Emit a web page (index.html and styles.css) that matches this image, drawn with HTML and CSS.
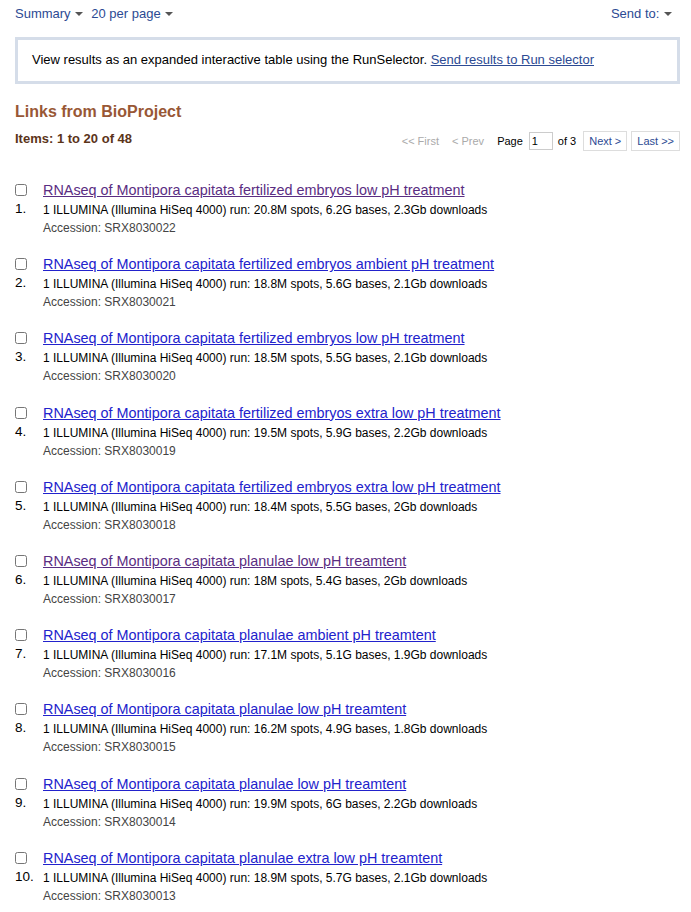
FILE: index.html
```html
<!DOCTYPE html>
<html lang="en">
<head>
    <meta charset="UTF-8">
    <title>Links from BioProject - SRA</title>
    <link rel="stylesheet" href="styles.css">
</head>
<body>

    <!-- Topbar med visning og send to -->
    <div class="topbar">
        <div class="display-opts">
            <a class="drop">Summary <span class="caret"></span></a>
            <a class="drop">20 per page <span class="caret"></span></a>
        </div>
        <a class="drop">Send to: <span class="caret"></span></a>
    </div>

    <div class="runsel-box">
        View results as an expanded interactive table using the RunSelector. <a href="#" class="plain-link">Send results to Run selector</a>
    </div>

    <h2 class="result-title">Links from BioProject</h2>

    <div class="pager-row">
        <h3 class="result-count">Items: 1 to 20 of 48</h3>
        <div class="pager">
            <span class="off">&lt;&lt; First</span>
            <span class="off">&lt; Prev</span>
            <span class="page-lbl">Page</span>
            <input type="text" class="page-input" value="1">
            <span class="page-lbl">of 3</span>
            <a class="pg-btn">Next &gt;</a>
            <a class="pg-btn">Last &gt;&gt;</a>
        </div>
    </div>

    <div class="results">
        <div class="rprt">
            <div class="rprt-left"><input type="checkbox"><span class="num">1.</span></div>
            <div class="rprt-body">
                <a href="#" class="title visited">RNAseq of Montipora capitata fertilized embryos low pH treatment</a>
                <p class="desc">1 ILLUMINA (Illumina HiSeq 4000) run: 20.8M spots, 6.2G bases, 2.3Gb downloads</p>
                <p class="acc">Accession: SRX8030022</p>
            </div>
        </div>
        <div class="rprt">
            <div class="rprt-left"><input type="checkbox"><span class="num">2.</span></div>
            <div class="rprt-body">
                <a href="#" class="title">RNAseq of Montipora capitata fertilized embryos ambient pH treatment</a>
                <p class="desc">1 ILLUMINA (Illumina HiSeq 4000) run: 18.8M spots, 5.6G bases, 2.1Gb downloads</p>
                <p class="acc">Accession: SRX8030021</p>
            </div>
        </div>
        <div class="rprt">
            <div class="rprt-left"><input type="checkbox"><span class="num">3.</span></div>
            <div class="rprt-body">
                <a href="#" class="title">RNAseq of Montipora capitata fertilized embryos low pH treatment</a>
                <p class="desc">1 ILLUMINA (Illumina HiSeq 4000) run: 18.5M spots, 5.5G bases, 2.1Gb downloads</p>
                <p class="acc">Accession: SRX8030020</p>
            </div>
        </div>
        <div class="rprt">
            <div class="rprt-left"><input type="checkbox"><span class="num">4.</span></div>
            <div class="rprt-body">
                <a href="#" class="title">RNAseq of Montipora capitata fertilized embryos extra low pH treatment</a>
                <p class="desc">1 ILLUMINA (Illumina HiSeq 4000) run: 19.5M spots, 5.9G bases, 2.2Gb downloads</p>
                <p class="acc">Accession: SRX8030019</p>
            </div>
        </div>
        <div class="rprt">
            <div class="rprt-left"><input type="checkbox"><span class="num">5.</span></div>
            <div class="rprt-body">
                <a href="#" class="title">RNAseq of Montipora capitata fertilized embryos extra low pH treatment</a>
                <p class="desc">1 ILLUMINA (Illumina HiSeq 4000) run: 18.4M spots, 5.5G bases, 2Gb downloads</p>
                <p class="acc">Accession: SRX8030018</p>
            </div>
        </div>
        <div class="rprt">
            <div class="rprt-left"><input type="checkbox"><span class="num">6.</span></div>
            <div class="rprt-body">
                <a href="#" class="title visited">RNAseq of Montipora capitata planulae low pH treamtent</a>
                <p class="desc">1 ILLUMINA (Illumina HiSeq 4000) run: 18M spots, 5.4G bases, 2Gb downloads</p>
                <p class="acc">Accession: SRX8030017</p>
            </div>
        </div>
        <div class="rprt">
            <div class="rprt-left"><input type="checkbox"><span class="num">7.</span></div>
            <div class="rprt-body">
                <a href="#" class="title">RNAseq of Montipora capitata planulae ambient pH treamtent</a>
                <p class="desc">1 ILLUMINA (Illumina HiSeq 4000) run: 17.1M spots, 5.1G bases, 1.9Gb downloads</p>
                <p class="acc">Accession: SRX8030016</p>
            </div>
        </div>
        <div class="rprt">
            <div class="rprt-left"><input type="checkbox"><span class="num">8.</span></div>
            <div class="rprt-body">
                <a href="#" class="title">RNAseq of Montipora capitata planulae low pH treamtent</a>
                <p class="desc">1 ILLUMINA (Illumina HiSeq 4000) run: 16.2M spots, 4.9G bases, 1.8Gb downloads</p>
                <p class="acc">Accession: SRX8030015</p>
            </div>
        </div>
        <div class="rprt">
            <div class="rprt-left"><input type="checkbox"><span class="num">9.</span></div>
            <div class="rprt-body">
                <a href="#" class="title">RNAseq of Montipora capitata planulae low pH treamtent</a>
                <p class="desc">1 ILLUMINA (Illumina HiSeq 4000) run: 19.9M spots, 6G bases, 2.2Gb downloads</p>
                <p class="acc">Accession: SRX8030014</p>
            </div>
        </div>
        <div class="rprt">
            <div class="rprt-left"><input type="checkbox"><span class="num">10.</span></div>
            <div class="rprt-body">
                <a href="#" class="title">RNAseq of Montipora capitata planulae extra low pH treamtent</a>
                <p class="desc">1 ILLUMINA (Illumina HiSeq 4000) run: 18.9M spots, 5.7G bases, 2.1Gb downloads</p>
                <p class="acc">Accession: SRX8030013</p>
            </div>
        </div>
    </div>

</body>
</html>
```

FILE: styles.css
```css
/* Grundlayout */
body {
    font-family: "Liberation Sans", Arial, sans-serif;
    margin: 0;
    padding: 4px 11px 0 15px;
    color: #000;
    background: #fff;
    font-size: 13px;
}

/* Topbar */
.topbar {
    display: flex;
    justify-content: space-between;
    align-items: center;
    height: 18px;
    padding-right: 8px;
}

.display-opts {
    display: flex;
    gap: 8px;
}

.drop {
    color: #2c4a93;
    font-size: 13px;
    cursor: pointer;
}

.caret {
    display: inline-block;
    width: 0;
    height: 0;
    border-left: 4px solid transparent;
    border-right: 4px solid transparent;
    border-top: 4px solid #555;
    vertical-align: middle;
    margin-left: 1px;
}

/* RunSelector boks */
.runsel-box {
    margin-top: 15px;
    border: 3px solid #d5dde9;
    padding: 12px 14px 13px;
    font-size: 13px;
    line-height: 16px;
}

.plain-link {
    color: #2c4a93;
}

/* Overskrifter */
.result-title {
    color: #985735;
    font-size: 16px;
    font-weight: bold;
    margin: 18px 0 0;
    line-height: 20px;
}

.pager-row {
    display: flex;
    justify-content: space-between;
    align-items: flex-end;
    margin-top: 9px;
}

.result-count {
    color: #5b3419;
    font-size: 13px;
    font-weight: bold;
    margin: 0 0 5px;
}

/* Sideskift */
.pager {
    display: flex;
    align-items: center;
    font-size: 11px;
}

.off {
    color: #aaa;
    margin-right: 13px;
}

.page-lbl {
    color: #000;
}

.page-input {
    width: 18px;
    height: 14px;
    padding: 1px 2px;
    margin: 0 5px 0 6px;
    border: 1px solid #ccc;
    font-size: 11px;
    font-family: inherit;
}

.pg-btn {
    color: #2c4a93;
    border: 1px solid #ddd;
    padding: 3px 5px;
    margin-left: 4px;
    cursor: pointer;
}

.pg-btn:first-of-type {
    margin-left: 7px;
}

/* Resultatliste */
.results {
    margin-top: 31px;
}

.rprt {
    display: flex;
    height: 74.2px;
}

.rprt-left {
    width: 28px;
    display: flex;
    flex-direction: column;
}

.rprt-left input {
    margin: 2px 0 0 0;
    width: 12px;
    height: 12px;
}

.num {
    font-size: 13.5px;
    margin-top: 5px;
}

.rprt-body {
    flex: 1;
}

.title {
    font-size: 14.4px;
    color: #2222cc;
    line-height: 17px;
}

.title.visited {
    color: #5a2d82;
}

.desc {
    margin: 3px 0 0;
    font-size: 12px;
    line-height: 17px;
}

.acc {
    margin: 0;
    font-size: 12px;
    line-height: 18px;
    color: #444;
}
```
